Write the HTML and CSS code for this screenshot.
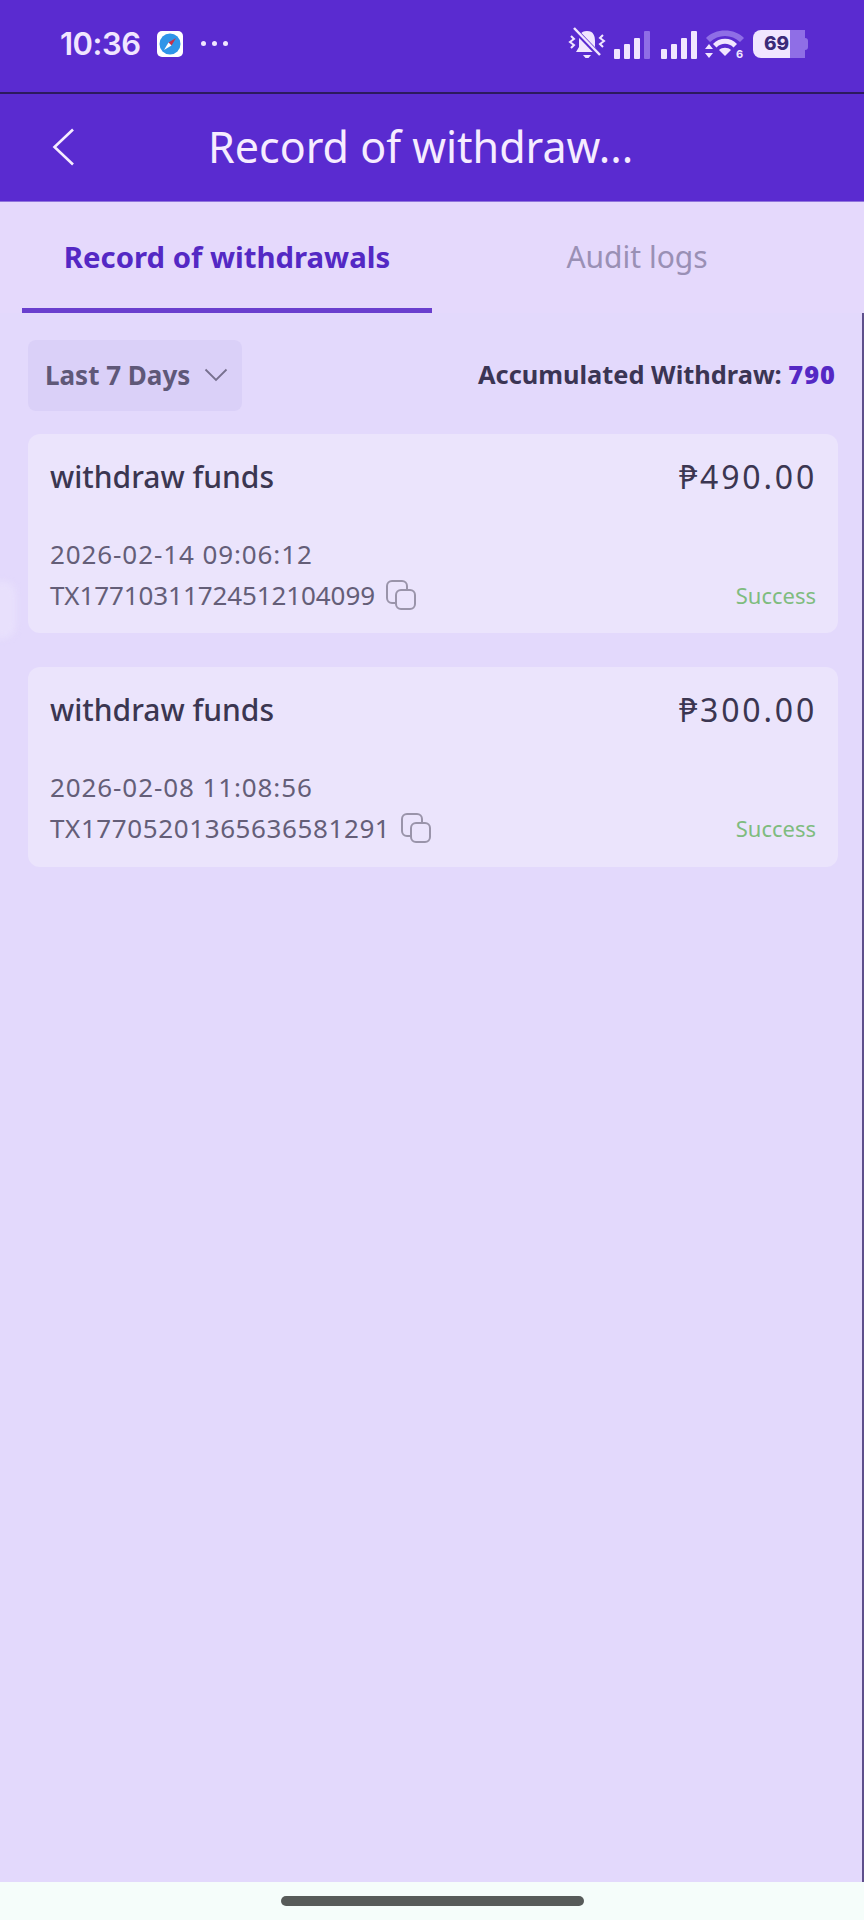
FILE: index.html
```html
<!DOCTYPE html>
<html>
	<head>
		<meta charset="UTF-8">
		<title>Record of withdrawals</title>
		<link rel="stylesheet" href="styles.css">
	</head>
	<body>
		<div class="page">
			<div class="statusbar">
				<div class="status-left">
					<span class="clock">10:36</span>
					<svg class="safari" width="26" height="26" viewBox="0 0 26 26">
						<rect width="26" height="26" rx="5" fill="#fff"/>
						<circle cx="13" cy="13" r="10.5" fill="#2f95e8"/>
						<path d="M19 7 L11.5 11.5 L14.5 14.5 Z" fill="#c8324a"/>
						<path d="M7 19 L11.5 11.5 L14.5 14.5 Z" fill="#fff"/>
					</svg>
					<span class="dots"><i></i><i></i><i></i></span>
				</div>
				<div class="status-right">
					<svg width="38" height="34" viewBox="0 0 38 34">
						<path d="M19 4 C12.5 4 11 9 11 14 L11 20 L8 25 L30 25 L27 20 L27 14 C27 9 25.500 4 19 4 Z" fill="#f1e6ff"/>
						<path d="M15 28 L23 28 L20.500 31 L17.500 31 Z" fill="#f1e6ff"/>
						<path d="M6 2 L32 29" stroke="#5a2bd0" stroke-width="5"/>
						<path d="M6 1 L32 28" stroke="#f1e6ff" stroke-width="2.500"/>
						<path d="M3 9 L6 12 L2 15 L6 18 L3 21" fill="none" stroke="#f1e6ff" stroke-width="2"/>
						<path d="M35 8 L32 11 L36 14 L32 17 L35 20" fill="none" stroke="#f1e6ff" stroke-width="2"/>
					</svg>
					<svg class="signal" width="36" height="28" viewBox="0 0 36 28">
						<rect x="0" y="18" width="6" height="10" rx="1" fill="#f1e6ff"/>
						<rect x="10" y="13" width="6" height="15" rx="1" fill="#f1e6ff"/>
						<rect x="20" y="7" width="6" height="21" rx="1" fill="#f1e6ff"/>
						<rect x="30" y="0" width="6" height="28" rx="1" fill="#8f6ee6"/>
					</svg>
					<svg class="signal" width="36" height="28" viewBox="0 0 36 28">
						<rect x="0" y="18" width="6" height="10" rx="1" fill="#f1e6ff"/>
						<rect x="10" y="13" width="6" height="15" rx="1" fill="#f1e6ff"/>
						<rect x="20" y="7" width="6" height="21" rx="1" fill="#f1e6ff"/>
						<rect x="30" y="0" width="6" height="28" rx="1" fill="#f1e6ff"/>
					</svg>
					<svg width="40" height="34" viewBox="0 -2 40 34">
						<path d="M1 9 C10 -1 30 -1 39 9 L35 13 C27 5 13 5 5 13 Z" fill="#8f6ee6"/>
						<path d="M8 15 C14 8 26 8 32 15 L28.500 18.500 C24 13.500 16 13.500 11.500 18.500 Z" fill="#f1e6ff"/>
						<path d="M14 21 C17 18 23 18 26 21 L20 27 Z" fill="#f1e6ff"/>
						<path d="M4 15 L8 20 L0 20 Z M4 29 L8 24 L0 24 Z" fill="#f1e6ff"/>
						<text x="31" y="29" class="wifi-six">6</text>
					</svg>
					<div class="battery">
						<span class="battery-fill">69</span>
						<span class="battery-cap"></span>
					</div>
				</div>
			</div>

			<div class="header">
				<svg class="back" width="24" height="38" viewBox="0 0 24 38">
					<path d="M21 1.500 L2.500 19 L21 36.500" fill="none" stroke="#f6ecff" stroke-width="2.600"/>
				</svg>
				<div class="title">Record of withdraw...</div>
			</div>

			<div class="tabs">
				<div class="tab active">Record of withdrawals</div>
				<div class="tab">Audit logs</div>
			</div>

			<div class="content">
				<div class="edge-blob"></div>
				<div class="toolbar">
					<div class="filter">
						<span>Last 7 Days</span>
						<svg width="24" height="14" viewBox="0 0 24 14">
							<path d="M1.500 1.500 L12 12 L22.500 1.500" fill="none" stroke="#77708f" stroke-width="1.800"/>
						</svg>
					</div>
					<div class="total">Accumulated Withdraw: <b>790</b></div>
				</div>

				<div class="card">
					<div class="card-top">
						<span class="card-name">withdraw funds</span>
						<span class="card-amount">₱490.00</span>
					</div>
					<div class="card-time">2026-02-14 09:06:12</div>
					<div class="card-bottom">
						<div class="card-order">
							<span>TX17710311724512104099</span>
							<svg class="copy" width="32" height="32" viewBox="0 0 32 32">
								<path d="M10 24 H7 A5 5 0 0 1 2 19 V7 A5 5 0 0 1 7 2 H17 A5 5 0 0 1 22 7 V10" fill="none" stroke="#9a94aa" stroke-width="2"/>
								<rect x="11" y="11" width="19" height="19" rx="5" fill="none" stroke="#9a94aa" stroke-width="2"/>
							</svg>
						</div>
						<span class="card-status">Success</span>
					</div>
				</div>

				<div class="card">
					<div class="card-top">
						<span class="card-name">withdraw funds</span>
						<span class="card-amount">₱300.00</span>
					</div>
					<div class="card-time">2026-02-08 11:08:56</div>
					<div class="card-bottom">
						<div class="card-order">
							<span class="order-wide">TX17705201365636581291</span>
							<svg class="copy" width="32" height="32" viewBox="0 0 32 32">
								<path d="M10 24 H7 A5 5 0 0 1 2 19 V7 A5 5 0 0 1 7 2 H17 A5 5 0 0 1 22 7 V10" fill="none" stroke="#9a94aa" stroke-width="2"/>
								<rect x="11" y="11" width="19" height="19" rx="5" fill="none" stroke="#9a94aa" stroke-width="2"/>
							</svg>
						</div>
						<span class="card-status">Success</span>
					</div>
				</div>
			</div>

			<div class="navbar">
				<div class="home-pill"></div>
			</div>
		</div>
	</body>
</html>
```

FILE: styles.css
```css
* {
	margin: 0;
	padding: 0;
	box-sizing: border-box;
}
body {
	font-family: "Noto Sans", "Liberation Sans", sans-serif;
	background-color: #e3d9fc;
}
.page {
	display: flex;
	flex-direction: column;
	width: 864px;
	height: 1920px;
	overflow: hidden;
}
.statusbar {
	display: flex;
	justify-content: space-between;
	align-items: center;
	height: 94px;
	padding: 0 60px 5px 60px;
	background-color: #5a2bd0;
	border-bottom: 2px solid #2c1a5e;
}
.status-left {
	display: flex;
	align-items: center;
}
.clock {
	font-family: "Inter", sans-serif;
	font-size: 31px;
	font-weight: 600;
	color: #f1e6ff;
	letter-spacing: -0.500px;
}
.safari {
	margin-left: 16px;
}
.dots {
	display: flex;
	gap: 6px;
	margin-left: 18px;
}
.dots i {
	width: 5px;
	height: 5px;
	border-radius: 50%;
	background-color: #f1e6ff;
}
.status-right {
	display: flex;
	align-items: center;
	gap: 8px;
	margin-right: -4px;
}
.signal {
	margin-top: 2px;
}
.signal + .signal {
	margin-left: 3px;
}
.wifi-six {
	font-family: "Inter", sans-serif;
	font-size: 11px;
	font-weight: 700;
	fill: #f1e6ff;
}
.battery {
	display: flex;
	align-items: center;
}
.battery-fill {
	width: 52px;
	height: 28px;
	line-height: 28px;
	padding-left: 11px;
	border-radius: 8px 0 0 8px;
	font-family: "Inter", sans-serif;
	font-size: 19px;
	font-weight: 800;
	color: #3b2a78;
	background: linear-gradient(to right, #f1e6ff 37px, #8f6ee6 37px);
}
.battery-cap {
	width: 3px;
	height: 12px;
	border-radius: 0 3px 3px 0;
	background-color: #8f6ee6;
}
.header {
	display: flex;
	align-items: center;
	height: 108px;
	padding: 0 0 2px 52px;
	background-color: #5a2bd0;
	border-bottom: 1px solid #8f74dc;
}
.title {
	margin-left: 132px;
	font-size: 43px;
	color: #f6ecff;
	white-space: nowrap;
}
.tabs {
	display: flex;
	height: 111px;
	padding: 0 0 0 22px;
	background-color: #e5d9fc;
}
.tab {
	width: 410px;
	height: 111px;
	line-height: 110px;
	text-align: center;
	font-size: 30px;
	color: #9a90b5;
}
.tab.active {
	font-size: 29.300px;
	font-weight: 700;
	color: #5428c4;
	border-bottom: 5px solid #6a3fce;
}
.content {
	position: relative;
	flex: 1;
	padding: 27px 24px 0 28px;
	border-right: 2px solid #5e4f8c;
}
.edge-blob {
	position: absolute;
	left: -12px;
	top: 268px;
	width: 28px;
	height: 58px;
	border-radius: 14px;
	background-color: #e8e0fc;
	filter: blur(3px);
}
.toolbar {
	display: flex;
	justify-content: space-between;
	align-items: center;
	margin-bottom: 23px;
	padding-right: 2px;
}
.filter {
	display: flex;
	align-items: center;
	gap: 14px;
	width: 214px;
	height: 71px;
	padding: 0 0 2px 17px;
	border-radius: 8px;
	background-color: #dad0f8;
	font-size: 26px;
	font-weight: 700;
	color: #5f5878;
}
.total {
	margin-bottom: 3px;
	font-size: 25.400px;
	font-weight: 700;
	color: #3b3554;
}
.total b {
	letter-spacing: 1px;
	color: #5428c4;
}
.card {
	height: 199px;
	margin-bottom: 34px;
	padding: 20px 22px 0 22px;
	border-radius: 12px;
	background-color: #ebe4fc;
}
.card:last-child {
	height: 200px;
}
.card-top {
	display: flex;
	justify-content: space-between;
	align-items: center;
	height: 44px;
	font-size: 30px;
	font-weight: 500;
	color: #3b3651;
}
.card-amount {
	font-size: 32px;
	font-weight: 400;
	letter-spacing: 2.800px;
	margin-right: -1px;
}
.card-time {
	margin-top: 36px;
	height: 40px;
	line-height: 40px;
	font-size: 26px;
	letter-spacing: 0.900px;
	color: #645e78;
}
.card-bottom {
	display: flex;
	justify-content: space-between;
	align-items: center;
	height: 42px;
}
.card-order {
	display: flex;
	align-items: center;
	gap: 10px;
	font-size: 26px;
	letter-spacing: -0.100px;
	color: #645e78;
}
.order-wide {
	letter-spacing: 0.600px;
}
.card-status {
	font-size: 22px;
	color: #7fbc7f;
}
.navbar {
	display: flex;
	justify-content: center;
	height: 38px;
	padding-top: 14px;
	background-color: #f5fdfa;
}
.home-pill {
	width: 303px;
	height: 10px;
	border-radius: 5px;
	background-color: #575b59;
}
```
